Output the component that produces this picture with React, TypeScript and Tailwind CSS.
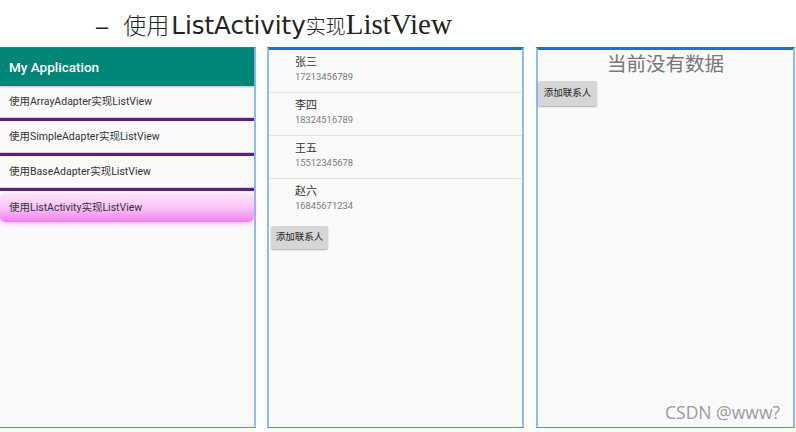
const cjk = "font-['Roboto','Noto_Sans_CJK_SC',sans-serif]";

const menu = [
  "使用ArrayAdapter实现ListView",
  "使用SimpleAdapter实现ListView",
  "使用BaseAdapter实现ListView",
];

const contacts = [
  { name: "张三", phone: "17213456789" },
  { name: "李四", phone: "18324516789" },
  { name: "王五", phone: "15512345678" },
  { name: "赵六", phone: "16845671234" },
];

function AddButton({ className = "" }: { className?: string }) {
  return (
    <button
      className={`flex items-center justify-center rounded-[2px] bg-[#d6d6d6] text-[9.5px] text-[#222] shadow-[0_1px_1.5px_rgba(0,0,0,0.3)] ${cjk} ${className}`}
    >
      添加联系人
    </button>
  );
}

function MainScreen() {
  return (
    <div className="flex h-full w-[256px] flex-col border-r-2 border-b border-r-[#8dbbf6] border-b-[#4b8fe6] border-t border-t-[#2f7ad6] bg-[#fafafa]">
      <div className="flex h-[38px] items-center bg-[#008577] pl-[9px] text-[13.5px] font-medium text-white shadow-[0_1px_2px_rgba(0,0,0,0.25)] font-['Roboto',sans-serif]">
        My Application
      </div>
      {menu.map((label) => (
        <div key={label}>
          <div className={`flex h-[31px] items-center pl-[9px] text-[10.5px] text-[#333] ${cjk}`}>
            {label}
          </div>
          <div className="h-px bg-[#d4d4d4]" />
          <div className="h-[3px] bg-[#5b1f8b]" />
        </div>
      ))}
      <div className="mt-[2px] flex h-[29px] items-center rounded-[6px] bg-gradient-to-b from-[#fde6fb] via-[#f9c4f5] to-[#f07cee] pl-[9px] shadow-[0_2px_4px_rgba(240,120,238,0.45)]">
        <span className={`text-[10.5px] text-[#333] ${cjk}`}>使用ListActivity实现ListView</span>
      </div>
    </div>
  );
}

function ContactScreen() {
  return (
    <div className="flex h-full w-[257px] flex-col border-x-2 border-b border-t-2 border-x-[#8dbbf6] border-b-[#4b8fe6] border-t-[#1f6fd2] bg-[#fafafa]">
      <div className="h-px bg-[#2b7a6d]" />
      {contacts.map((c, i) => (
        <div
          key={c.name}
          className={`flex h-[43px] flex-col pl-[26px] pt-[6px] ${i < contacts.length - 1 ? "border-b border-[#e2e2e2]" : ""}`}
        >
          <span className={`text-[11px] leading-[14px] text-[#333] ${cjk}`}>{c.name}</span>
          <span className="text-[9.4px] leading-[14px] text-[#7a7a7a] font-['Roboto',sans-serif]">
            {c.phone}
          </span>
        </div>
      ))}
      <AddButton className="ml-[2px] mt-[4px] h-[23px] w-[57px]" />
    </div>
  );
}

function EmptyScreen() {
  return (
    <div className="flex h-full w-[259px] flex-col border-x-2 border-b border-t-2 border-x-[#8dbbf6] border-b-[#4b8fe6] border-t-[#1f6fd2] bg-[#fafafa]">
      <div className="h-px bg-[#2b7a6d]" />
      <div className={`h-[28px] pt-px text-center text-[19.5px] leading-[28px] text-[#777] ${cjk}`}>
        当前没有数据
      </div>
      <AddButton className="mt-[3px] h-[25px] w-[59px]" />
      <div className="mt-auto mb-[2px] mr-[13px] self-end text-[17.5px] text-[#9a9a9a] font-['Open_Sans','Noto_Sans_CJK_SC',sans-serif]">
        CSDN @www?
      </div>
    </div>
  );
}

export default function App() {
  return (
    <div className="h-[432px] w-[796px] overflow-hidden bg-white">
      <div className="flex h-[47px] items-baseline pl-[96px] pt-[10px] leading-none text-[#222]">
        <span className="mr-[15px] text-[22px] font-['Liberation_Sans',sans-serif]">–</span>
        <span className="mr-[2px] text-[23px] font-light font-['Noto_Sans_CJK_SC',sans-serif]">使用</span>
        <span className="text-[24.5px] font-['DejaVu_Sans',sans-serif]">ListActivity</span>
        <span className="text-[20px] font-light font-['Noto_Sans_CJK_SC',sans-serif]">实现</span>
        <span className="text-[29px] font-['Liberation_Serif',serif]">ListView</span>
      </div>
      <div className="flex h-[381px] items-stretch">
        <MainScreen />
        <div className="w-[11px]" />
        <ContactScreen />
        <div className="w-[12px]" />
        <EmptyScreen />
      </div>
    </div>
  );
}
